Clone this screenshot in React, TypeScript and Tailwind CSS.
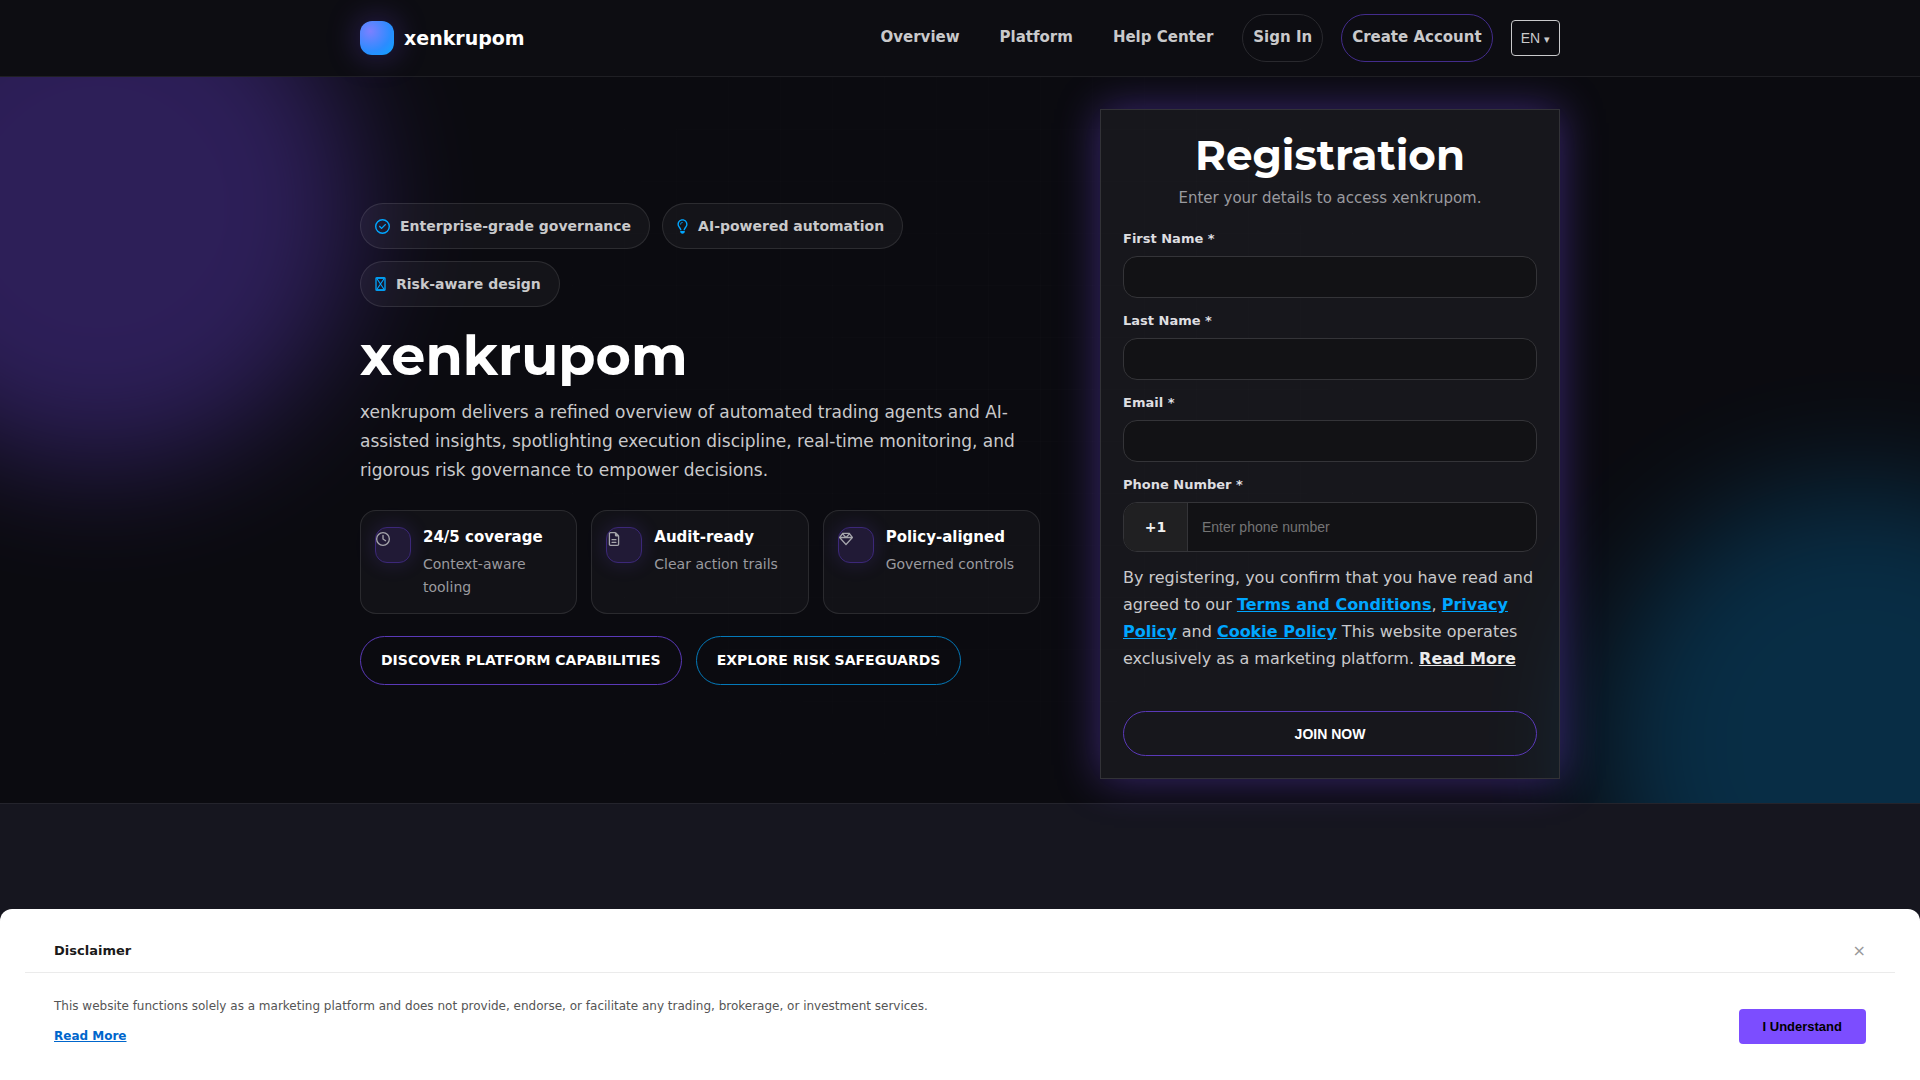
import type { ReactNode } from "react";
import { FaRegCircleCheck, FaRegClock, FaRegFileLines, FaRegGem, FaRegLightbulb } from "react-icons/fa6";

function CrossedBoxIcon() {
  return (
    <svg viewBox="0 0 11 14" fill="none" stroke="currentColor" className="h-[14px] w-[11px]">
      <rect x="1" y="0.8" width="9" height="12.4" rx="0.4" strokeWidth="1.3" />
      <path d="M1.5 1h8M1.5 13h8" strokeWidth="1.6" />
      <path d="M1.8 1.5 9.2 12.5M9.2 1.5 1.8 12.5" strokeWidth="1.1" />
    </svg>
  );
}

const navLinks = ["Overview", "Platform", "Help Center"];

const badges = [
  { label: "Enterprise-grade governance", icon: <FaRegCircleCheck className="h-[15px] w-[15px]" /> },
  { label: "AI-powered automation", icon: <FaRegLightbulb className="h-[15px] w-[11px]" /> },
  { label: "Risk-aware design", icon: <CrossedBoxIcon /> },
];

const features = [
  { title: "24/5 coverage", text: "Context-aware tooling", icon: <FaRegClock className="h-[14px] w-[14px]" /> },
  { title: "Audit-ready", text: "Clear action trails", icon: <FaRegFileLines className="h-[14px] w-[14px]" /> },
  { title: "Policy-aligned", text: "Governed controls", icon: <FaRegGem className="h-[14px] w-[14px]" /> },
];

const fields = [
  { id: "first-name", label: "First Name *", type: "text" },
  { id: "last-name", label: "Last Name *", type: "text" },
  { id: "email", label: "Email *", type: "email" },
];

function Header() {
  return (
    <header className="relative z-10 border-b border-[#1f1f24] bg-[#0d0d12]">
      <div className="mx-auto flex h-[76px] max-w-[1200px] items-center justify-between">
        <a href="#" className="flex items-center gap-[10px]">
          <span className="h-[34px] w-[34px] rounded-xl bg-[radial-gradient(circle_at_30%_30%,#7c80ff,#2b8cff_60%,#0aa6ff)] shadow-[0_0_32px_rgba(124,77,255,0.35)]" />
          <span className="text-[19px] font-bold text-white">xenkrupom</span>
        </a>
        <nav className="flex items-center gap-[18px] text-[15px] font-bold text-[#c9c9cb]">
          {navLinks.map((link) => (
            <a key={link} href="#" className="px-[11px] pt-[10px] pb-3 leading-6">
              {link}
            </a>
          ))}
          <a href="#" className="rounded-full border border-[#29292e] px-[10px] pt-[10px] pb-3 leading-6">
            Sign In
          </a>
          <a href="#" className="rounded-full border border-[#432c8c] px-[10px] pt-[10px] pb-3 leading-6">
            Create Account
          </a>
          <button
            type="button"
            className="h-9 rounded border border-[#c9c9cb] px-[9px] font-['Liberation_Sans',sans-serif] text-sm font-normal"
          >
            EN <span className="text-[11px]">▾</span>
          </button>
        </nav>
      </div>
    </header>
  );
}

function HeroBackdrop() {
  return (
    <div className="absolute inset-0 overflow-hidden" aria-hidden="true">
      <div className="absolute -top-[130px] -left-40 h-[520px] w-[520px] rounded-full bg-[#7c4dff] opacity-30 blur-[60px]" />
      <div className="absolute -right-50 -bottom-50 h-[520px] w-[520px] rounded-full bg-[#00a6ff] opacity-22 blur-[60px]" />
      <div className="absolute inset-0 bg-[linear-gradient(to_right,rgba(255,255,255,0.012)_1px,transparent_1px),linear-gradient(to_bottom,rgba(255,255,255,0.012)_1px,transparent_1px)] bg-[size:52px_52px] [mask-image:radial-gradient(circle_at_50%_40%,black,transparent_70%)]" />
    </div>
  );
}

function HeroCopy() {
  return (
    <div>
      <ul className="flex flex-wrap gap-3">
        {badges.map((badge) => (
          <li
            key={badge.label}
            className="flex h-[46px] items-center gap-[10px] rounded-full border border-white/10 bg-white/4 pr-[18px] pl-[14px] text-sm font-bold text-[#c9c9cb]"
          >
            <span className="text-[#00a6ff]">{badge.icon}</span>
            {badge.label}
          </li>
        ))}
      </ul>
      <h1 className="mt-[18px] font-[Montserrat,Inter,sans-serif] text-[54px] leading-[62px] font-bold text-white">
        xenkrupom
      </h1>
      <p className="mt-[11px] text-[17px] leading-[29px] text-[#c9c9cb]">
        xenkrupom delivers a refined overview of automated trading agents and AI-assisted insights, spotlighting
        execution discipline, real-time monitoring, and rigorous risk governance to empower decisions.
      </p>
      <div className="mt-[25px] grid grid-cols-3 gap-[14px]">
        {features.map((feature) => (
          <FeatureCard key={feature.title} title={feature.title} text={feature.text} icon={feature.icon} />
        ))}
      </div>
      <div className="mt-[22px] flex gap-[14px] text-sm font-bold text-white uppercase">
        <a href="#" className="rounded-full border border-[#5a39b8] px-5 py-3 leading-[23px]">
          Discover platform capabilities
        </a>
        <a href="#" className="rounded-full border border-[#0479b9] px-5 py-3 leading-[23px]">
          Explore risk safeguards
        </a>
      </div>
    </div>
  );
}

function FeatureCard({ title, text, icon }: { title: string; text: string; icon: ReactNode }) {
  return (
    <div className="flex items-start gap-3 rounded-2xl border border-white/10 bg-white/3 px-[14px] pt-4 pb-[14px]">
      <div className="h-9 w-9 shrink-0 rounded-xl border border-[#3c2879] bg-[#211a36] pt-1 text-[#a6a6ac] shadow-[0_0_20px_rgba(124,77,255,0.18)]">
        {icon}
      </div>
      <div>
        <h2 className="text-[15px] leading-5 font-bold text-white">{title}</h2>
        <p className="mt-[6px] text-sm leading-[23px] text-[#9a9a9f]">{text}</p>
      </div>
    </div>
  );
}

function RegistrationForm() {
  return (
    <form className="border border-[#323237] bg-white/5 p-[22px] shadow-[0_0_40px_rgba(124,77,255,0.4)]">
      <h2 className="text-center font-[Montserrat,Inter,sans-serif] text-[42px] leading-[46px] font-bold text-white">
        Registration
      </h2>
      <p className="mt-2 text-center text-[15px] leading-6 text-[#9a9a9f]">Enter your details to access xenkrupom.</p>
      <div className="mt-[19px] flex flex-col gap-[13px]">
        {fields.map((field) => (
          <div key={field.id}>
            <label htmlFor={field.id} className="block text-[13px] leading-5 font-bold text-[#dedee0]">
              {field.label}
            </label>
            <input
              id={field.id}
              type={field.type}
              className="mt-[7px] block h-[42px] w-full rounded-[14px] border border-[#343438] bg-[#121215] px-[14px] text-sm text-white outline-none"
            />
          </div>
        ))}
        <div>
          <label htmlFor="phone" className="block text-[13px] leading-5 font-bold text-[#dedee0]">
            Phone Number *
          </label>
          <div className="mt-[7px] flex h-[50px] overflow-hidden rounded-[14px] border border-[#343438] bg-[#121215]">
            <span className="flex w-16 items-center justify-center border-r border-[#343438] bg-[#202022] text-sm font-bold text-[#f0f0f0]">
              +1
            </span>
            <input
              id="phone"
              type="tel"
              placeholder="Enter phone number"
              className="min-w-0 flex-1 px-[14px] font-['Liberation_Sans',sans-serif] text-sm text-white outline-none placeholder:text-[#757575]"
            />
          </div>
        </div>
      </div>
      <p className="mt-3 text-base leading-[27px] text-[#c9c9cb]">
        By registering, you confirm that you have read and agreed to our{" "}
        <a href="#" className="font-bold text-[#00a6ff] underline">Terms and Conditions</a>,{" "}
        <a href="#" className="font-bold text-[#00a6ff] underline">Privacy Policy</a> and{" "}
        <a href="#" className="font-bold text-[#00a6ff] underline">Cookie Policy</a> This website operates exclusively
        as a marketing platform. <a href="#" className="font-bold text-[#ececec] underline">Read More</a>
      </p>
      <button
        type="submit"
        className="mt-[39px] block h-[45px] w-full rounded-full border border-[#5a39b8] font-['Liberation_Sans',sans-serif] text-sm font-bold text-white uppercase"
      >
        Join now
      </button>
    </form>
  );
}

function Disclaimer() {
  return (
    <aside className="fixed inset-x-0 bottom-0 z-20 rounded-t-xl bg-white px-[25px] pt-6 pb-[34px]">
      <div className="flex h-10 items-center justify-between border-b border-[#ebebeb] px-[29px] pb-1">
        <h2 className="text-[13px] font-bold text-[#1a1a1a]">Disclaimer</h2>
        <button type="button" aria-label="Close" className="text-base text-[#999999]">
          ×
        </button>
      </div>
      <div className="flex items-end justify-between px-[29px] pt-[23px] text-xs">
        <div>
          <p className="leading-5 text-[#555555]">
            This website functions solely as a marketing platform and does not provide, endorse, or facilitate any
            trading, brokerage, or investment services.
          </p>
          <a href="#" className="mt-[10px] inline-block leading-5 font-bold text-[#0066cc] underline">
            Read More
          </a>
        </div>
        <button
          type="button"
          className="mb-0.5 h-[35px] rounded bg-[#7c4dff] px-6 font-['Liberation_Sans',sans-serif] text-[13px] font-bold text-black"
        >
          I Understand
        </button>
      </div>
    </aside>
  );
}

export default function App() {
  return (
    <div className="min-h-screen bg-[#16161f] font-['DejaVu_Sans',sans-serif]">
      <Header />
      <main>
        <section className="relative border-b border-[#24242c] bg-[#0b0b10] pt-8 pb-6">
          <HeroBackdrop />
          <div className="relative mx-auto grid max-w-[1200px] grid-cols-[minmax(0,1fr)_460px] items-center gap-[60px]">
            <HeroCopy />
            <RegistrationForm />
          </div>
        </section>
      </main>
      <Disclaimer />
    </div>
  );
}
